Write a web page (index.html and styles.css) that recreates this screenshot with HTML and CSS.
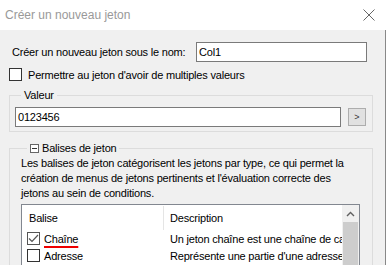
FILE: index.html
```html
<!DOCTYPE html>
<html lang="fr">
<head>
    <meta charset="utf-8">
    <title>Créer un nouveau jeton</title>
    <link rel="stylesheet" href="styles.css">
</head>
<body>
    <div class="window">
        <div class="titlebar">
            <span class="title">Créer un nouveau jeton</span>
            <svg class="close" width="12" height="12" viewBox="0 0 12 12">
                <path d="M0.5 0.5L11.5 11.5M11.5 0.5L0.5 11.5" stroke="#666" stroke-width="1" fill="none"/>
            </svg>
        </div>

        <div class="content">
            <div class="name-row">
                <span class="name-label">Créer un nouveau jeton sous le nom:</span>
                <div class="textbox name-box">Col1</div>
            </div>

            <div class="check-row">
                <span class="checkbox"></span>
                <span>Permettre au jeton d'avoir de multiples valeurs</span>
            </div>

            <fieldset class="group value-group">
                <legend>Valeur</legend>
                <div class="value-row">
                    <div class="textbox value-box">0123456</div>
                    <button class="arrow-btn">&gt;</button>
                </div>
            </fieldset>

            <fieldset class="group tags-group">
                <legend><span class="collapse"></span>Balises de jeton</legend>
                <p class="desc">Les balises de jeton catégorisent les jetons par type, ce qui permet la<br>création de menus de jetons pertinents et l'évaluation correcte des<br>jetons au sein de conditions.</p>
                <div class="listbox">
                    <div class="list-main">
                        <div class="list-head">
                            <span class="col-tag">Balise</span>
                            <span class="col-desc">Description</span>
                        </div>
                        <div class="list-row">
                            <span class="col-tag">
                                <span class="checkbox checked">
                                    <svg width="11" height="11" viewBox="0 0 11 11"><path d="M1 5.5L4 8.5L10 2" stroke="#555" stroke-width="1.2" fill="none"/></svg>
                                </span>
                                <span class="spell">Chaîne</span>
                            </span>
                            <span class="col-desc">Un jeton chaîne est une chaîne de caractères</span>
                        </div>
                        <div class="list-row">
                            <span class="col-tag">
                                <span class="checkbox"></span>
                                <span>Adresse</span>
                            </span>
                            <span class="col-desc">Représente une partie d'une adresse</span>
                        </div>
                    </div>
                    <div class="scrollbar">
                        <div class="scroll-up">
                            <svg width="9" height="6" viewBox="0 0 9 6"><path d="M1 5L4.5 1.5L8 5" stroke="#606060" stroke-width="1.4" fill="none"/></svg>
                        </div>
                        <div class="thumb"></div>
                    </div>
                </div>
            </fieldset>
        </div>
    </div>
</body>
</html>
```

FILE: styles.css
```css
body {
    margin: 0;
    font-family: "Liberation Sans", Arial, sans-serif;
    font-size: 11px;
    letter-spacing: -0.2px;
    color: #000;
    background: #fff;
}

.window {
    width: 386px;
    height: 265px;
    overflow: hidden;
}

.titlebar {
    height: 30px;
    display: flex;
    align-items: center;
    justify-content: space-between;
    padding: 0 11px 0 5px;
    background: #fff;
}

.title {
    color: #999;
    font-size: 12px;
    letter-spacing: 0;
}

.content {
    height: 235px;
    background: #f0f0f0;
    border-right: 1px solid #888;
    padding: 12px 0 0 9px;
    box-sizing: border-box;
    white-space: nowrap;
}

.name-row {
    display: flex;
    align-items: center;
    justify-content: space-between;
    width: 358px;
    padding-left: 3px;
    box-sizing: border-box;
}

.textbox {
    height: 20px;
    line-height: 18px;
    border: 1px solid #7a7a7a;
    background: #fff;
    padding: 0 2px;
    box-sizing: border-box;
}

.name-box {
    width: 171px;
}

.check-row {
    display: flex;
    align-items: center;
    gap: 6px;
    height: 17px;
    margin-top: 4px;
}

.checkbox {
    width: 13px;
    height: 13px;
    border: 1px solid #333;
    background: #fff;
    box-sizing: border-box;
    display: inline-flex;
    align-items: center;
    justify-content: center;
    flex-shrink: 0;
}

.checkbox.checked {
    border-color: #555;
}

.group {
    margin: 0;
    width: 364px;
    box-sizing: border-box;
    border: 1px solid #dcdcdc;
    padding: 0;
}

.group legend {
    padding: 0 3px;
    margin-left: 6px;
    line-height: 14px;
    display: flex;
    align-items: center;
}

.value-group {
    margin-top: 5px;
    height: 44px;
    padding: 5px 0 0 5px;
}

.value-row {
    display: flex;
    align-items: center;
    gap: 7px;
}

.value-box {
    width: 326px;
}

.arrow-btn {
    width: 18px;
    height: 18px;
    padding: 0;
    border: 1px solid #adadad;
    background: #e1e1e1;
    font-family: "Liberation Sans", Arial, sans-serif;
    font-size: 9px;
    color: #333;
}

.tags-group {
    margin-top: 9px;
    height: 160px;
    padding: 1px 0 0 11px;
}

.collapse {
    width: 9px;
    height: 9px;
    border: 1px solid #666;
    box-sizing: border-box;
    margin-right: 3px;
    position: relative;
    background: #fff;
}

.collapse::after {
    content: "";
    position: absolute;
    left: 1px;
    right: 1px;
    top: 3px;
    height: 1px;
    background: #333;
}

.desc {
    margin: 0;
    line-height: 15px;
}

.listbox {
    margin-top: 3px;
    width: 339px;
    height: 100px;
    border: 1px solid #828790;
    background: #fff;
    display: flex;
    box-sizing: border-box;
}

.list-main {
    flex: 1;
    overflow: hidden;
}

.list-head {
    display: flex;
    height: 25px;
    align-items: center;
}

.list-head .col-tag {
    border-right: 1px solid #e5e5e5;
    height: 24px;
    line-height: 24px;
    padding-left: 7px;
}

.list-head .col-desc {
    padding-left: 6px;
}

.col-tag {
    width: 142px;
    box-sizing: border-box;
    flex-shrink: 0;
}

.list-row {
    display: flex;
    align-items: center;
    height: 17px;
}

.list-row .col-tag {
    display: flex;
    align-items: center;
    gap: 4px;
    padding-left: 5px;
}

.list-row .col-desc {
    padding-left: 6px;
}

.spell {
    text-decoration: underline;
    text-decoration-color: #e00;
    text-decoration-thickness: 2px;
    text-underline-offset: 3px;
}

.scrollbar {
    width: 17px;
    background: #f0f0f0;
    display: flex;
    flex-direction: column;
    flex-shrink: 0;
}

.scroll-up {
    height: 17px;
    display: flex;
    align-items: center;
    justify-content: center;
}

.thumb {
    flex: 1;
    margin: 0 1px;
    background: #cdcdcd;
}
```
